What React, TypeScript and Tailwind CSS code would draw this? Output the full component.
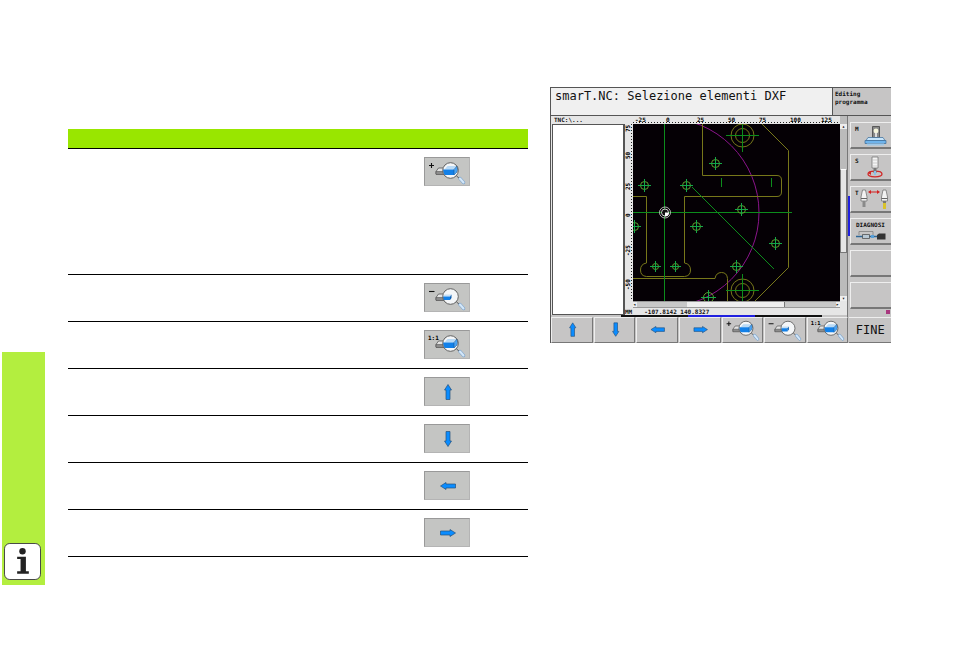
import type { ReactNode } from "react";

type IconName = "plus" | "minus" | "fit" | "up" | "down" | "left" | "right";

const rows: { icon: IconName; label: string; height: string }[] = [
  { icon: "plus", label: "Zoom in", height: "h-[126px]" },
  { icon: "minus", label: "Zoom out", height: "h-[47px]" },
  { icon: "fit", label: "Zoom 1:1", height: "h-[47px]" },
  { icon: "up", label: "Up", height: "h-[47px]" },
  { icon: "down", label: "Down", height: "h-[47px]" },
  { icon: "left", label: "Left", height: "h-[47px]" },
  { icon: "right", label: "Right", height: "h-[47px]" },
];

const softkeys: { icon: IconName; label: string }[] = [
  { icon: "up", label: "Up" },
  { icon: "down", label: "Down" },
  { icon: "left", label: "Left" },
  { icon: "right", label: "Right" },
  { icon: "plus", label: "Zoom in" },
  { icon: "minus", label: "Zoom out" },
  { icon: "fit", label: "Zoom 1:1" },
];

const arrowTurn: Record<string, number> = { up: 0, right: 90, down: 180, left: 270 };

const KeyIcon = ({ name }: { name: IconName }) => {
  if (name in arrowTurn) {
    return (
      <svg viewBox="0 0 44 28" className="w-full" aria-hidden="true">
        <path
          d="M22 6.500l3.500 5.500h-1.500v9.500h-4v-9.500h-1.500z"
          fill="#0a8cff"
          stroke="#24507c"
          strokeWidth="0.7"
          transform={`translate(1 0) rotate(${arrowTurn[name]} 22 14)`}
        />
      </svg>
    );
  }
  return (
    <svg viewBox="0 0 44 28" className="w-full" aria-hidden="true">
      {name === "plus" && <path d="M4 7.500h5M6.500 5v5" stroke="#111" strokeWidth="1.1" />}
      {name === "minus" && <path d="M4 7.500h5.500" stroke="#111" strokeWidth="1.1" />}
      {name === "fit" && (
        <text x="3" y="8.500" fontSize="6" fontWeight="bold" fontFamily="DejaVu Sans Mono, monospace">
          1:1
        </text>
      )}
      <path d="M11 13.500l2.500-3.500h9v6h-11.500z" fill="#e4e4e4" stroke="#444" strokeWidth="0.7" />
      <path d="M11 13.500h9v3H11z" fill="#8c8c8c" stroke="#444" strokeWidth="0.5" />
      <circle cx="25.500" cy="12.500" r="7.800" fill="#f4f6f8" />
      {name === "minus" ? (
        <>
          <path d="M18 12.500l1.500-2h7l-1.500 2z" fill="#c4def4" />
          <path d="M18 12.500h7v3.500h-6.500z" fill="#1280e8" />
          <path d="M25 12.500l1.500-2v3.500l-1.500 2z" fill="#0a5cb0" />
        </>
      ) : (
        <>
          <path d="M19.500 11.500l3-3.500h9.500l-3 3.500z" fill="#b9daf6" />
          <path d="M18 11.500h11v5.500h-9.500q-1.500-2.500-1.500-5.500z" fill="#1280e8" />
          <path d="M29 11.500l3-3.500q1.500 3.500 0 6l-3 3z" fill="#4aa4f4" stroke="#124b87" strokeWidth="0.5" />
        </>
      )}
      <circle cx="25.500" cy="12.500" r="7.800" fill="none" stroke="#555" strokeWidth="0.9" />
      <path d="M31.500 18l2.500 2" stroke="#555" />
      <path d="M35 20.500l3.500 4" stroke="#7da4cc" strokeWidth="3.400" strokeLinecap="round" />
      <path d="M35 20.500l3.500 4" stroke="#d4e8fa" strokeWidth="2" strokeLinecap="round" />
    </svg>
  );
};

// sheet symbols: x, y, radius
const holes = [
  [11, 61, 4],
  [53, 61, 4],
  [82, 39, 4],
  [108, 85, 4],
  [142, 119, 4],
  [103, 142, 4],
  [63, 102, 4],
  [1, 102, 4],
  [22, 142, 3],
  [42, 142, 3],
  [75, 173, 5],
];

const Drawing = () => (
  <svg viewBox="0 0 207 177" className="block w-full bg-[#050005]" fill="none" role="img" aria-label="DXF">
    <circle cx="31.500" cy="88.500" r="94.500" stroke="#8a148a" />
    <g stroke="#77771a">
      <path d="M69.500 0V51.500H144q4.500 0 4.500 4.500V68q0 4.500-4.500 4.500H51.500V139q6 1 6 7t-6 6.500H13.500q-6-.5-6-6.500t6-7V72.500H0" />
      <path d="M0 154.500H82q1-6 6.500-6t6 6V177" />
      <path d="M129 0l26.500 26.500V143.500L122 177" />
      <circle cx="109.500" cy="11.500" r="11.500" />
      <circle cx="109.500" cy="11.500" r="7" />
      <circle cx="109.500" cy="166.500" r="11.500" />
      <circle cx="109.500" cy="166.500" r="7" />
    </g>
    <g stroke="#0c8c1c">
      <path d="M31.500 0V177M0 88.500H159M88.500 54v9M138.500 54v9" />
      <path d="M59 63l82 82" />
      <path d="M93 11.500h33M109.500 0v28M93 166.500h33M109.500 150v27" />
    </g>
    {holes.map(([x, y, r]) => (
      <g key={`${x}-${y}`}>
        <circle cx={x + 0.5} cy={y + 0.5} r={r} stroke="#5f9c2c" />
        <path d={`M${x - r - 2} ${y + 0.5}h${2 * r + 5}M${x + 0.5} ${y - r - 2}v${2 * r + 5}`} stroke="#14a848" />
      </g>
    ))}
    <circle cx="32" cy="88.500" r="5.500" stroke="#ddd" strokeWidth="0.8" />
    <circle cx="32" cy="88.500" r="3.500" fill="#111" stroke="#fff" strokeWidth="0.8" />
    <path d="M32 88.500h4a4 4 0 0 1-4 4z" fill="#fff" />
  </svg>
);

const MachineKey = ({ children, label }: { children?: ReactNode; label: string }) => (
  <button
    type="button"
    aria-label={label}
    className="block h-[27px] w-full overflow-hidden border-t border-l border-b-2 border-t-[#eee] border-l-[#eee] border-b-[#777] bg-[#c6c5c5]"
  >
    <svg viewBox="0 0 40 24" className="block w-full" fontSize="6" fontWeight="bold" fill="#111" aria-hidden="true">
      {children}
    </svg>
  </button>
);

const ruler = ["-25", "0", "25", "50", "75", "100", "125"];
const sideRuler: [string, number][] = [
  ["75", 16],
  ["50", 43],
  ["25", 74],
  ["0", 101],
  ["-25", 140],
  ["-50", 174],
];

const Screen = () => (
  <section className="border-t border-l border-[#555] bg-[#c6c5c5] font-['DejaVu_Sans_Mono',monospace] text-[6px] leading-[8px] text-[#111]">
    <header className="flex h-[28px] border-b border-[#555]">
      <h1 className="flex-1 bg-[#f0f0f0] px-1 text-[12px] leading-4 whitespace-nowrap">
        smarT.NC: Selezione elementi DXF
      </h1>
      <div className="w-[59px] border-l border-[#555] pt-0.5 pl-0.5 font-bold">
        Editing
        <br />
        programma
      </div>
    </header>
    <div className="flex">
      <div className="flex flex-1 flex-col">
        <div className="flex flex-1 bg-[#e6e6e6]">
          <div className="flex w-[74px] flex-col pl-px">
            <div className="h-2 pl-0.5 font-bold">TNC:\...</div>
            <div className="flex-1 border border-r-2 border-[#555] bg-white" />
          </div>
          <div className="flex flex-1 flex-col">
            <div className="flex">
              <svg viewBox="0 0 8 185" className="w-2 shrink-0" aria-hidden="true">
                {sideRuler.map(([value, y]) => (
                  <text key={value} transform={`translate(5 ${y}) rotate(-90)`} fontSize="6" fontWeight="bold">
                    {value}
                  </text>
                ))}
                <path d="M6.500 8V185" stroke="#222" strokeDasharray="1 2" />
              </svg>
              <div className="flex-1">
                <svg viewBox="0 0 207 8" className="block w-full" aria-hidden="true">
                  {ruler.map((value, i) => (
                    <text key={value} x={2 + i * 31} y="6" fontSize="6" fontWeight="bold">
                      {value}
                    </text>
                  ))}
                  <path d="M0 6.500H207" stroke="#222" strokeDasharray="1 2" />
                </svg>
                <Drawing />
              </div>
              <div className="flex w-[7px] flex-col bg-[#bbb] pt-2">
                <div className="h-[5px] bg-[#eee] text-center text-[5px] leading-[5px]">▴</div>
                <div className="mt-10 h-[84px] border border-[#777] border-t-white bg-[#e6e6e6]" />
                <div className="mt-auto h-[5px] bg-[#eee] text-center text-[5px] leading-[5px]">▾</div>
              </div>
            </div>
            <div className="mr-[7px] ml-2 flex h-[7px] border-y border-[#999] bg-[#c8c8c8] text-[5px] leading-[5px]">
              <span className="w-1 bg-[#eee]">◂</span>
              <div className="ml-[50px] w-[98px] border-r border-[#777] bg-[#eee]" />
              <span className="ml-auto w-1 bg-[#eee]">▸</span>
            </div>
            <div className="flex h-[7px] gap-3 leading-[7px] font-bold">
              <span>MM</span>
              <span>-107.8142 140.8327</span>
            </div>
          </div>
        </div>
        <div className="flex h-[2px] bg-[#c6c5c5] pl-[70px]">
          <div className="w-[67px] bg-[#111]" />
          <div className="w-[67px] bg-[#2020e0]" />
          <div className="w-[67px] bg-[#111]" />
        </div>
      </div>
      <div className="w-[3px] border-l border-[#777] pt-20">
        <div className="h-10 bg-[#2020e0]" />
      </div>
      <div className="flex w-[41px] flex-col gap-[5px] pt-1.5">
        <MachineKey label="M">
          <text x="4" y="8">
            M
          </text>
          <path d="M21.500 3.500h7v11h-7z" fill="#888" stroke="#444" strokeWidth="0.8" />
          <circle cx="25" cy="8" r="2.400" fill="#f5f5dc" />
          <path d="M24 10h2v4h-2z" fill="#ddd" />
          <path d="M17 14.500h15l2 3H15z" fill="#c6e4fa" stroke="#3b6c98" strokeWidth="0.7" />
          <path d="M14 17.500h21v3H14z" fill="#6fb4ec" stroke="#3b6c98" strokeWidth="0.7" />
          <path d="M16 20.500h17v2H16z" fill="#9fc8e8" />
        </MachineKey>
        <MachineKey label="S">
          <text x="4" y="8">
            S
          </text>
          <ellipse cx="24" cy="19" rx="7" ry="2.800" fill="none" stroke="#d02828" strokeWidth="1.3" />
          <path d="M21 2h6v11h-6z" fill="#f4f4f4" stroke="#777" strokeWidth="0.8" />
          <path d="M21 5h6M21 8h6M21 11h6" stroke="#bbb" strokeWidth="0.7" />
          <path d="M22.500 13h3v5h-3z" fill="#777" />
          <path d="M23 16h2v4h-2z" fill="#8cc0ea" />
          <path d="M17 18l3-2v4z" fill="#d02828" />
        </MachineKey>
        <MachineKey label="T">
          <text x="4" y="8">
            T
          </text>
          <path d="M11.500 3h3l1.500 7v4h-6v-4z" fill="#f2f2f2" stroke="#777" strokeWidth="0.8" />
          <path d="M10 11.500h6" stroke="#666" />
          <path d="M11.500 14h3v6h-3z" fill="#8a8a8a" />
          <path d="M32 3h3l1.500 7v4h-6v-4z" fill="#f2f2f2" stroke="#777" strokeWidth="0.8" />
          <path d="M30.500 11.500h6" stroke="#666" />
          <path d="M32 14h3v2h-3z" fill="#777" />
          <path d="M32 16h3v6h-3z" fill="#d8c22c" />
          <path d="M17 5l3-2v1.500h6V3l3 2-3 2V5.500h-6V7z" fill="#d42020" />
        </MachineKey>
        <MachineKey label="Diagnosi">
          <text x="5" y="8">
            DIAGNOSI
          </text>
          <path d="M8 16v-3.500h14V16" fill="none" stroke="#777" strokeWidth="0.7" />
          <path d="M5 17.500h23" stroke="#2d6696" strokeWidth="1.500" />
          <path d="M11.500 15.500h7v4h-7z" fill="#b8c8d4" stroke="#444" strokeWidth="0.7" />
          <path d="M20 16h3v3h-3z" fill="#58a0d8" />
          <path d="M26 16l2-1.500h6.500v6H26z" fill="#333" />
        </MachineKey>
        <MachineKey label="Empty 1" />
        <MachineKey label="Empty 2" />
        <div className="mt-[-4px] mr-px h-1 w-1 self-end bg-[#a8387e]" />
      </div>
    </div>
    <nav className="grid grid-cols-8 gap-px">
      {softkeys.map((key) => (
        <button
          key={key.label}
          type="button"
          aria-label={key.label}
          className="flex h-[26px] items-center border border-t-[#eee] border-l-[#eee] border-r-[#777] border-b-[#777] bg-[#c6c5c5]"
        >
          <KeyIcon name={key.icon} />
        </button>
      ))}
      <button type="button" className="border-t border-b border-t-[#eee] border-b-[#777] text-[12px]">
        FINE
      </button>
    </nav>
  </section>
);

const App = () => (
  <main className="flex min-h-screen items-start bg-white pr-[63px] pl-0.5">
    <aside className="mt-[352px] flex h-[233px] w-[43px] shrink-0 items-end bg-[#b3ee3f] pr-1 pb-[5px] pl-0.5">
      <svg viewBox="0 0 38 38" className="w-full" role="img" aria-label="Info">
        <rect x="0.500" y="0.500" width="37" height="37" rx="5.500" fill="#fff" stroke="#444" />
        <circle cx="19" cy="8.500" r="3.300" fill="#222" />
        <path d="M13.500 14h9v15h3v2.500h-12V29h3.500V16.500h-3.500z" fill="#222" />
      </svg>
    </aside>
    <div className="mt-[129px] ml-[23px] flex-[460]">
      <table className="w-full table-fixed border-separate border-spacing-0">
        <thead>
          <tr className="h-5">
            <th className="border-b border-black bg-[#99e600] p-0" />
            <th className="w-[104px] border-b border-black bg-[#99e600] p-0" />
          </tr>
        </thead>
        <tbody>
          {rows.map((row) => (
            <tr key={row.icon} className={row.height}>
              <td className="border-b border-black p-0" />
              <td className="border-b border-black p-0 pt-2 align-top">
                <button
                  type="button"
                  aria-label={row.label}
                  className="flex h-[29px] w-[46px] items-center border border-t-[#999] border-r-[#b4b4b4] border-b-[#b4b4b4] border-l-[#999] bg-[#c4c5c3]"
                >
                  <KeyIcon name={row.icon} />
                </button>
              </td>
            </tr>
          ))}
        </tbody>
      </table>
    </div>
    <div className="mt-[87px] ml-[22px] flex-[341]">
      <Screen />
    </div>
  </main>
);

export default App;
